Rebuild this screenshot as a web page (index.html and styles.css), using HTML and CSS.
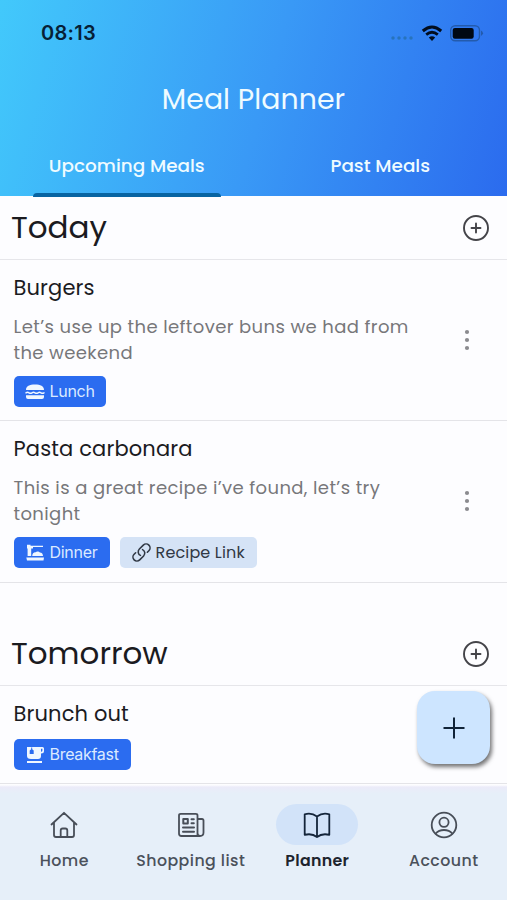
FILE: index.html
```html
<!DOCTYPE html>
<html lang="en">
<head>
<meta charset="utf-8">
<title>Meal Planner</title>
<link rel="stylesheet" href="styles.css">
</head>
<body>
<div class="app">
  <header class="header">
    <div class="status">
      <span class="time">08:13</span>
      <span class="status-icons">
        <svg class="dots" width="24" height="6" viewBox="0 0 24 6"><circle cx="3" cy="3" r="1.7"/><circle cx="9" cy="3" r="1.7"/><circle cx="15" cy="3" r="1.7"/><circle cx="21" cy="3" r="1.7"/></svg>
        <svg class="wifi" width="22" height="17" viewBox="0 0 22 17"><path d="M1.8 6Q11-2 20.2 6" stroke-width="3"/><path d="M5.2 9.6q5.800-4.700 11.600 0" stroke-width="2.700"/><path class="wifi-base" d="M7.800 12.500q3.200-2.500 6.400 0L11 15.900z"/></svg>
        <svg class="battery" width="34" height="17" viewBox="0 0 34 17"><rect class="shell" x=".7" y=".8" width="28.800" height="15" rx="4.500"/><rect x="2.700" y="2.900" width="21" height="10.800" rx="2.200"/><path class="cap" d="M31 5.600q4 2.700 0 5.400z"/></svg>
      </span>
    </div>
    <h1 class="title">Meal Planner</h1>
    <nav class="tabs">
      <a class="tab active">Upcoming Meals</a>
      <a class="tab">Past Meals</a>
    </nav>
  </header>

  <main class="content">
    <section class="day">
      <div class="day-head">
        <h2>Today</h2>
        <svg class="add" viewBox="0 0 28 28"><circle cx="14" cy="14" r="12"/><path d="M14 9.500v9M9.500 14h9"/></svg>
      </div>
      <article class="meal">
        <div class="meal-body">
          <h3>Burgers</h3>
          <p>Let’s use up the leftover buns we had from<br>the weekend</p>
          <div class="chips">
            <span class="chip lunch"><svg class="chip-icon" viewBox="0 0 20 18"><path d="M1 7C1 3 4.500 1.500 10 1.500S19 3 19 7zM1 12.300h18V14q0 2-2 2H3q-2 0-2-2z"/><path class="line" d="M1 9.800q1.500-.9 3 0t3 0 3 0 3 0 3 0 3 0"/></svg>Lunch</span>
          </div>
        </div>
        <svg class="more" viewBox="0 0 8 24"><circle cx="4" cy="4" r="2.100"/><circle cx="4" cy="12" r="2.100"/><circle cx="4" cy="20" r="2.100"/></svg>
      </article>
      <article class="meal second">
        <div class="meal-body">
          <h3>Pasta carbonara</h3>
          <p>This is a great recipe i’ve found, let’s try<br>tonight</p>
          <div class="chips">
            <span class="chip dinner"><svg class="chip-icon" viewBox="0 0 20 18"><path d="M2 .8h3.500v1H18v1.100H8V4.500H6.200V12H2.600V4.500H2zM7.200 12c0-2.500 1.500-4 3.500-3.800C11.500 7 14 7.200 14.800 8.500c2.200.2 3.200 1.500 3.200 3.500zM1.300 13.500h17.700l-.5 3h-16.500z"/></svg>Dinner</span>
            <span class="chip link"><svg class="link-icon" viewBox="0 0 24 24"><path d="M13.190 8.688a4.500 4.500 0 0 1 1.242 7.244l-4.500 4.500a4.500 4.500 0 0 1-6.364-6.364l1.757-1.757m13.350-.622 1.757-1.757a4.500 4.500 0 0 0-6.364-6.364l-4.500 4.500a4.500 4.500 0 0 0 1.242 7.244"/></svg>Recipe Link</span>
          </div>
        </div>
        <svg class="more" viewBox="0 0 8 24"><circle cx="4" cy="4" r="2.100"/><circle cx="4" cy="12" r="2.100"/><circle cx="4" cy="20" r="2.100"/></svg>
      </article>
    </section>

    <section class="day tomorrow">
      <div class="day-head">
        <h2>Tomorrow</h2>
        <svg class="add" viewBox="0 0 28 28"><circle cx="14" cy="14" r="12"/><path d="M14 9.500v9M9.500 14h9"/></svg>
      </div>
      <article class="meal last">
        <div class="meal-body">
          <h3>Brunch out</h3>
          <div class="chips">
            <span class="chip breakfast"><svg class="chip-icon" viewBox="0 0 20 18"><path fill-rule="evenodd" d="M2 1h15.500Q19 1 19 2.500V5q0 2.500-3 2.500V10q0 3-3 3H6q-4 0-4-3zM16 2.800v3q1.400 0 1.400-1.400V2.800zM6.200 1.500v1.700L4.700 4.500V8h4V4.500L7.200 3.200V1.500zM2 15h15v2H2z"/></svg>Breakfast</span>
          </div>
        </div>
      </article>
    </section>
  </main>

  <button class="fab" aria-label="Add meal"><svg viewBox="0 0 24 24"><path d="M12 1.500v21M1.500 12h21"/></svg></button>

  <nav class="bottom">
    <a class="item"><span class="pill"><svg viewBox="0 0 28 28"><path d="M1.500 13.500 14 1.800l12.500 11.700M4 11.500V24q0 2 2 2h16q2 0 2-2V11.500M10.700 26v-6.500q0-2 2-2h2.600q2 0 2 2V26"/></svg></span><span>Home</span></a>
    <a class="item"><span class="pill"><svg viewBox="0 0 28 28"><path d="M20.500 24.500V4.500q0-1.700-1.700-1.700H3.700Q2 2.800 2 4.500v18q0 2.500 2.500 2.500H23q3.500 0 3.500-3.500V9.500Q26.500 8 25 8h-4.500M20.500 22q0 3 2.500 3"/><path d="M6.300 8h4.500v4.500H6.300zM14.500 8.200h2.300M14.500 12.200h2.300M6 16.500h11M6 20.700h11" stroke-width="2"/></svg></span><span>Shopping list</span></a>
    <a class="item current"><span class="pill"><svg viewBox="0 0 28 28"><path d="M14 5.500Q8.500 1.300 1.700 3.300v20.500Q9 22 14 26q5-4 12.300-2.200V3.300Q19.500 1.300 14 5.500zV26"/></svg></span><span>Planner</span></a>
    <a class="item"><span class="pill"><svg viewBox="0 0 28 28"><circle cx="14" cy="14" r="12.300"/><circle cx="14" cy="11.300" r="4.600"/><path d="M5.700 22.500q3-3.500 8.300-3.500t8.300 3.500"/></svg></span><span>Account</span></a>
  </nav>
</div>
</body>
</html>
```
FILE: styles.css
```css
* { box-sizing: border-box; }
body, h1, h2, h3, p { margin: 0; }
body { font-family: Poppins, Inter, sans-serif; color: #1b1b1f; background: #fdfdff; }
h1, h2, h3 { font-weight: 400; }
svg { display: block; flex: none; fill: none; stroke-linecap: round; stroke-linejoin: round; }

.app { position: relative; display: flex; flex-direction: column; width: 507px; height: 900px; overflow: hidden; }

.header { flex: none; height: 196px; display: flex; flex-direction: column; background: linear-gradient(106deg, #42c9fb 0%, #3999f6 52%, #2b6bee 100%); }
.status { height: 66px; padding: 0 23px 0 41px; display: flex; align-items: center; justify-content: space-between; }
.time { font-family: Inter, sans-serif; font-size: 20px; font-weight: 600; letter-spacing: .3px; color: #071f36; }
.status-icons { display: flex; align-items: center; }
.dots { fill: #2773bc; margin: 9px 7px 0 0; }
.wifi { stroke: #020d1d; stroke-linecap: butt; margin-right: 7px; }
.wifi-base { fill: #020d1d; stroke: none; }
.battery { fill: #000814; }
.shell { fill: none; stroke: #235bad; stroke-width: 1.4; }
.cap { fill: #235bad; }
.title { height: 66px; line-height: 66px; text-align: center; font-size: 28.3px; letter-spacing: .08px; color: #effbff; }
.tabs { flex: 1; display: grid; grid-template-columns: 1fr 1fr; }
.tab { position: relative; padding-top: 22px; line-height: 24px; text-align: center; font-size: 18.4px; font-weight: 500; color: #effbff; }
.active::after { content: ""; position: absolute; left: 33px; bottom: -1px; width: 188px; height: 4px; border-radius: 4px 4px 0 0; background: #0864a2; }

.content { flex: none; height: 588px; }
.day-head { height: 64px; padding: 0 17px 0 11px; display: flex; align-items: center; justify-content: space-between; border-bottom: 1.500px solid #e6e6ea; }
.day-head h2 { margin-top: -2px; font-size: 31px; line-height: 40px; letter-spacing: 0; }
.add { width: 28px; height: 28px; stroke: #444449; stroke-width: 1.900; }
.meal { height: 161px; padding: 13px 36px 0 13.500px; display: flex; justify-content: space-between; border-bottom: 1.500px solid #e4e4e8; }
.meal.second { height: 162px; }
.meal h3 { font-size: 21px; line-height: 30px; letter-spacing: .15px; }
.meal p { margin-top: 11px; font-size: 18px; line-height: 26px; letter-spacing: .39px; color: #77777a; white-space: nowrap; }
.chips { display: flex; gap: 10px; margin-top: 10px; }
.chip { height: 31px; padding: 0 0 1px 11px; display: flex; align-items: center; border-radius: 5px; background: #2b6cf0; color: #dbeaff; font-family: Inter, sans-serif; font-size: 16px; letter-spacing: -.3px; }
.chip-icon { width: 20px; height: 18px; margin: 1px 5px 0 0; fill: #f0f7ff; }
.chip-icon .line { fill: none; stroke: #f0f7ff; stroke-width: 1.500; }
.lunch { width: 92px; }
.dinner { width: 96px; }
.breakfast { width: 117px; }
.link { width: 137px; padding-bottom: 0; background: #d5e3f6; color: #303844; font-family: Poppins, Inter, sans-serif; letter-spacing: .15px; }
.link-icon { width: 21px; height: 21px; margin-right: 4px; stroke: #303844; stroke-width: 1.800; }
.more { width: 8px; height: 24px; margin-top: 55px; fill: #8b8b8f; }
.tomorrow { margin-top: 39px; }
.meal.last { height: 98px; }

.fab { position: absolute; left: 417px; top: 691px; width: 73px; height: 73px; padding: 0; display: grid; place-items: center; border: 0; border-radius: 18px; background: #cde5ff; box-shadow: 2px 3px 4px rgba(0, 0, 0, .55); }
.fab svg { width: 24px; height: 24px; stroke: #102338; stroke-width: 2; stroke-linecap: butt; }

.bottom { flex: 1; padding: 20px 0 0 1px; display: grid; grid-template-columns: repeat(4, 1fr); background: linear-gradient(#fdfdff 1px, #ebebf9 3px, #e6eff9 10px); }
.item { display: flex; flex-direction: column; align-items: center; gap: 6px; font-size: 15.8px; line-height: 20px; font-weight: 500; letter-spacing: .45px; color: #4b515b; white-space: nowrap; }
.pill { width: 82px; height: 41px; display: grid; place-items: center; border-radius: 21px; }
.pill svg { width: 28px; height: 28px; stroke: #484e58; stroke-width: 1.800; }
.current { color: #1d242e; font-weight: 600; letter-spacing: .3px; }
.current .pill { background: #d2e3f9; }
.current svg { stroke: #14253a; }
```
